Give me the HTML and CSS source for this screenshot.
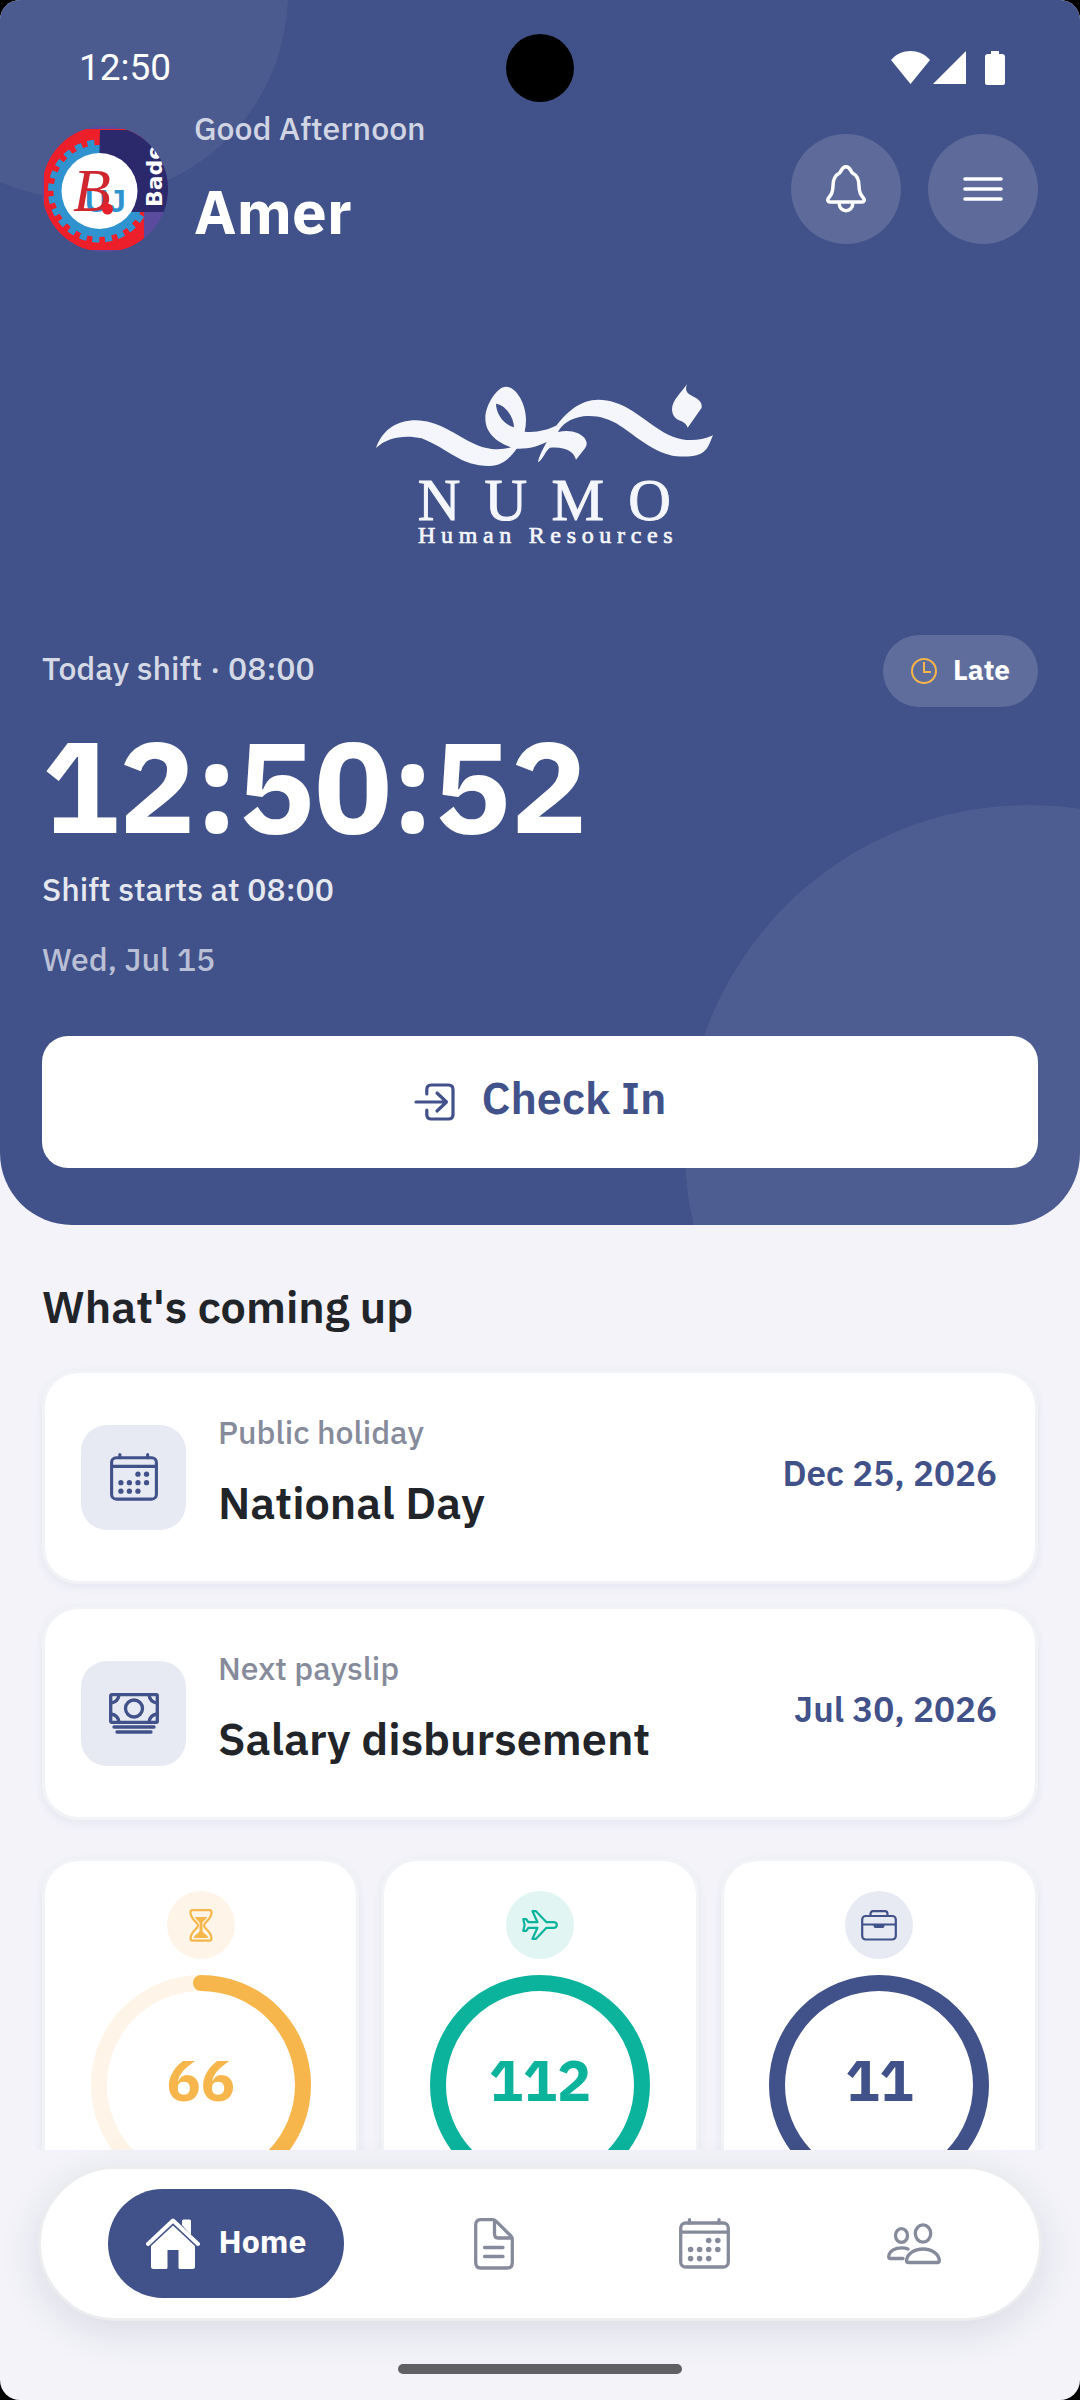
FILE: index.html
```html
<!DOCTYPE html>
<html lang="en">
<head>
<meta charset="utf-8">
<meta name="viewport" content="width=device-width, initial-scale=1">
<title>Numo Human Resources</title>
<link rel="stylesheet" href="styles.css">
</head>
<body>
<svg class="defs" aria-hidden="true">
  <symbol id="icon-calendar" viewBox="0 0 51 51">
    <g fill="none" stroke="currentColor" stroke-width="3.3" stroke-linecap="round">
      <rect x="1.7" y="5" width="47.6" height="44" rx="5"/>
      <path d="M2 14.2H49M10.5 1.7V5M40 1.7V5"/>
    </g>
    <g fill="currentColor">
      <circle cx="29.7" cy="22.5" r="2.8"/><circle cx="38.8" cy="22.5" r="2.8"/>
      <circle cx="11.6" cy="31.5" r="2.8"/><circle cx="20.6" cy="31.5" r="2.8"/><circle cx="29.7" cy="31.5" r="2.8"/><circle cx="38.8" cy="31.5" r="2.8"/>
      <circle cx="11.6" cy="40.6" r="2.8"/><circle cx="20.6" cy="40.6" r="2.8"/><circle cx="29.7" cy="40.6" r="2.8"/>
    </g>
  </symbol>
</svg>
<div class="screen">
  <main class="content">
    <section class="hero">
      <span class="bubble bubble-left"></span>
      <span class="bubble bubble-right"></span>

      <div class="status-bar">
        <span class="status-time">12:50</span>
        <svg class="status-icons" viewBox="0 0 114 34" width="114" height="34" aria-hidden="true" fill="#fff">
          <path d="M0 9C10-3 29-3 39 9L19.500 33Z"/>
          <path d="M75 0V33H42Z"/>
          <path d="M100 0h8v3h3q3 0 3 3v26q0 2-2 2h-16q-2 0-2-2V6q0-3 3-3h3z"/>
        </svg>
        <span class="camera"></span>
      </div>

      <header class="header">
        <svg class="avatar" viewBox="0 0 126 126" width="126" height="126" role="img" aria-label="Profile picture">
          <defs><clipPath id="round"><circle cx="63" cy="63" r="63"/></clipPath></defs>
          <g clip-path="url(#round)">
            <rect width="126" height="126" fill="#5a4b9e"/>
            <path d="M2 3H102V124H2Z" fill="#ec1f2a"/>
            <circle cx="57.500" cy="65" r="46" fill="#2f93cf"/>
            <circle cx="57.500" cy="65" r="48" fill="none" stroke="#2f93cf" stroke-width="7" stroke-dasharray="7 5.570"/>
            <path d="M58 4H126V86H56Z" fill="#2b286b"/>
            <circle cx="57.500" cy="65" r="38" fill="#fff"/>
            <text class="mono-blue" x="43" y="86">U</text>
            <text class="mono-blue" x="66" y="86">J</text>
            <text class="mono-red" x="31" y="85">B</text>
            <circle cx="65.500" cy="83" r="5.500" fill="#e5202c"/>
            <text class="mono-side" transform="translate(120 81) rotate(-90)">Bade</text>
          </g>
        </svg>
        <div class="greeting">
          <p class="greeting-text">Good Afternoon</p>
          <h1 class="greeting-name">Amer</h1>
        </div>
        <div class="header-actions">
          <button class="round-button" type="button" aria-label="Notifications">
            <svg viewBox="0 0 40 48" width="40" height="48" fill="none" stroke="#fff" stroke-width="3.500" stroke-linecap="round" stroke-linejoin="round">
              <path d="M4 37C1.800 37 1.200 35 2.400 33.400C5 30 6.800 28 7 21C7 13.500 9.500 10 13.500 8C15.500 6.500 15.500 1.800 20 1.800S24.500 6.500 26.500 8C30.500 10 33 13.500 33 21C33.200 28 35 30 37.600 33.400C38.800 35 38.200 37 36 37ZM13.200 38C13 48.200 27 48.200 26.800 38"/>
            </svg>
          </button>
          <button class="round-button" type="button" aria-label="Menu">
            <svg viewBox="0 0 40 24" width="40" height="24" fill="none" stroke="#fff" stroke-width="3.600" stroke-linecap="round"><path d="M2 2H38M2 12H38M2 22H38"/></svg>
          </button>
        </div>
      </header>

      <svg class="brand" viewBox="18 40 1044 486" width="348" height="162" role="img" aria-label="Numo Human Resources" fill="#f4f6fb">
        <path fill-rule="evenodd" d="M48 235C68 180 110 152 168 152C232 153 275 188 325 214C368 237 410 246 453 233C408 216 376 190 376 145C376 108 410 51 438 51C468 51 498 100 498 150Q498 170 494 186C530 189 563 182 590 167C622 125 662 90 715 90C785 90 835 137 885 171C935 206 990 227 1059 197C1048 222 1043 243 1022 252C1000 261 978 262 950 260C880 250 830 200 780 168C745 145 708 136 670 140C630 147 607 163 594 187C632 178 660 190 673 204C683 218 681 226 675 236L648 270C642 247 618 230 570 234C555 245 550 268 534 278C537 258 550 236 560 217C532 230 508 238 470 237C450 264 428 288 388 289C300 289 270 240 185 206C135 194 80 203 48 235ZM408 102C408 130 430 165 462 173C462 145 438 106 408 102Z"/>
        <path d="M981 43C966 66 936 92 936 118C936 140 950 150 965 155Q978 161 983 174L1025 114C1027 96 1014 88 998 80C980 70 974 62 981 43Z"/>
        <text class="brand-name" x="173" y="450">NUMO</text>
        <text class="brand-tag" x="174" y="521">Human Resources</text>
      </svg>

      <div class="shift-row">
        <p class="shift-label">Today shift · 08:00</p>
        <span class="late-pill">
          <svg viewBox="0 0 26 26" width="26" height="26" aria-hidden="true" fill="none" stroke="#f6b64b" stroke-width="2"><circle cx="13" cy="13" r="12"/><path d="M13 4V14H20"/></svg>
          <span class="late-text">Late</span>
        </span>
      </div>
      <time class="clock">12:50:52</time>
      <p class="shift-start">Shift starts at 08:00</p>
      <p class="shift-date">Wed, Jul 15</p>
      <button class="check-in" type="button">
        <svg viewBox="0 0 42 38" width="42" height="38" aria-hidden="true" fill="none" stroke="currentColor" stroke-width="3.200" stroke-linecap="round" stroke-linejoin="round">
          <path d="M12.800 11V6.500Q12.800 2 17.300 2H34.500Q39 2 39 6.500V31.500Q39 36 34.500 36H17.300Q12.800 36 12.800 31.500V27M2 19H32M23 10L32.500 19L23 28"/>
        </svg>
        <span class="check-in-text">Check In</span>
      </button>
    </section>

    <section class="upcoming">
      <h2 class="section-title">What's coming up</h2>
      <article class="card event">
        <span class="tile"><svg width="48" height="48" aria-hidden="true"><use href="#icon-calendar"/></svg></span>
        <div class="event-text">
          <p class="event-kind">Public holiday</p>
          <h3 class="event-name">National Day</h3>
        </div>
        <time class="event-date">Dec 25, 2026</time>
      </article>
      <article class="card event">
        <span class="tile">
          <svg viewBox="0 0 50 41" width="50" height="41" aria-hidden="true" fill="none" stroke="currentColor" stroke-width="3.300" stroke-linecap="round" stroke-linejoin="round">
            <rect x="1.700" y="1.700" width="46.600" height="27.600" rx="1"/><circle cx="25" cy="15.500" r="8.500"/>
            <path d="M10 2Q9 9 2 10M40 2Q41 9 48 10M10 29Q9 22 2 21M40 29Q41 22 48 21M5 34H45M8 39H42"/>
          </svg>
        </span>
        <div class="event-text">
          <p class="event-kind">Next payslip</p>
          <h3 class="event-name">Salary disbursement</h3>
        </div>
        <time class="event-date">Jul 30, 2026</time>
      </article>

      <div class="stats">
        <article class="card stat stat-amber">
          <span class="stat-icon">
            <svg viewBox="0 0 24 33" width="24" height="33" aria-hidden="true" fill="none" stroke="currentColor" stroke-width="2.200" stroke-linejoin="round">
              <path d="M3.500 1.200H20.500Q22.500 1.200 22.500 3.200C22.500 11 15 13 15 16.500S22.500 22 22.500 29.500Q22.500 31.700 20.500 31.700H3.500Q1.500 31.700 1.500 29.500C1.500 22 9 20 9 16.500S1.500 11 1.500 3.200Q1.500 1.200 3.500 1.200Z"/>
              <path fill="currentColor" stroke="none" d="M6 8H18C17 11 13.500 12 13.500 14V22C14 24.500 18 25 19.500 29H4.500C6 25 10 24.500 10.500 22V14C10.500 12 7 11 6 8Z"/>
            </svg>
          </span>
          <div class="ring">
            <svg class="ring-art" viewBox="0 0 220 220" aria-hidden="true"><circle class="ring-track" cx="110" cy="110" r="102"/><circle class="ring-value" cx="110" cy="110" r="102" pathLength="100" stroke-dasharray="50 50"/></svg>
            <span class="ring-number">66</span>
          </div>
        </article>
        <article class="card stat stat-green">
          <span class="stat-icon">
            <svg viewBox="0 0 36 30" width="36" height="30" aria-hidden="true" fill="none" stroke="currentColor" stroke-width="2.200" stroke-linejoin="round">
              <path d="M32 12.200H24.500L14 1.200H10.500L15.500 12.200H6.500L4 9H1.300L2.600 15L1.300 21H4L6.500 17.800H15.500L10.500 28.800H14L24.500 17.800H32Q34.800 17.500 34.800 15T32 12.200Z"/>
            </svg>
          </span>
          <div class="ring">
            <svg class="ring-art" viewBox="0 0 220 220" aria-hidden="true"><circle class="ring-value" cx="110" cy="110" r="102"/></svg>
            <span class="ring-number">112</span>
          </div>
        </article>
        <article class="card stat stat-blue">
          <span class="stat-icon">
            <svg viewBox="0 0 36 31" width="36" height="31" aria-hidden="true" fill="none" stroke="currentColor" stroke-width="2.200" stroke-linejoin="round">
              <rect x="1.200" y="6" width="33.600" height="23.500" rx="3.500"/><path d="M9.500 6V4Q9.500 1.200 12 1.200H24Q26.500 1.200 26.500 4V6M1.500 14.500H34.500"/>
              <path d="M12.500 14.500H23.500V16Q23.500 18 21.500 18H14.500Q12.500 18 12.500 16Z" fill="currentColor" stroke="none"/>
            </svg>
          </span>
          <div class="ring">
            <svg class="ring-art" viewBox="0 0 220 220" aria-hidden="true"><circle class="ring-value" cx="110" cy="110" r="102"/></svg>
            <span class="ring-number">11</span>
          </div>
        </article>
      </div>
    </section>
  </main>

  <footer class="dock">
    <nav class="tabs" aria-label="Main">
      <a class="tab tab-active" href="#home" aria-current="page">
        <svg viewBox="0 0 54 52" width="54" height="52" aria-hidden="true" fill="#fff">
          <path d="M2 26L27 2.500L52 26" fill="none" stroke="#fff" stroke-width="4" stroke-linecap="round" stroke-linejoin="round"/>
          <path d="M36 7V3Q36 1.500 37.500 1.500H43.500Q45 1.500 45 3V17Z"/>
          <path d="M27 7.500L49 28V48.500Q49 51 46.500 51H34Q32.500 51 32.500 49.500V32H21.500V49.500Q21.500 51 20 51H7.500Q5 51 5 48.500V28Z"/>
        </svg>
        <span class="tab-text">Home</span>
      </a>
      <a class="tab" href="#requests" aria-label="Requests">
        <svg viewBox="0 0 40 52" width="40" height="52" aria-hidden="true" fill="none" stroke="currentColor" stroke-width="3.300" stroke-linecap="round" stroke-linejoin="round">
          <path d="M6.500 1.700H18.500Q20.500 1.700 22 3.200L36.500 17.500Q38.300 19.300 38.300 21.500V44.500Q38.300 50 33.500 50H6.500Q1.700 50 1.700 44.500V7Q1.700 1.700 6.500 1.700ZM20.500 2.500V16Q20.500 20 24 20H37.500M10.500 29.500H29M10.500 38.500H29"/>
        </svg>
      </a>
      <a class="tab" href="#calendar" aria-label="Calendar">
        <svg width="51" height="51" aria-hidden="true"><use href="#icon-calendar"/></svg>
      </a>
      <a class="tab" href="#team" aria-label="Team">
        <svg viewBox="0 0 54 42" width="54" height="42" aria-hidden="true" fill="none" stroke="currentColor" stroke-width="3.300" stroke-linecap="round" stroke-linejoin="round">
          <ellipse cx="36" cy="10.500" rx="7.700" ry="8.700"/><ellipse cx="14.500" cy="12.500" rx="6" ry="6.800"/>
          <path d="M21.500 39.500Q19.500 39.500 19.500 37.500C20 31 27 26 36 26S52 31 52.300 37.500Q52.300 39.500 50.500 39.500ZM16 35.500H3.500Q1.700 35.500 1.700 33.500C2.500 27.500 8.500 24.800 14.500 24.800Q18.500 24.800 21 26"/>
        </svg>
      </a>
    </nav>
    <span class="home-bar"></span>
  </footer>
</div>
</body>
</html>
```

FILE: styles.css
```css
* { box-sizing: border-box; }

html { background: #000; }

body {
  margin: 0;
  font-family: "IBM Plex Sans", Roboto, "Liberation Sans", sans-serif;
  color: #212529;
}

h1, h2, h3, p { margin: 0; }

button { border: 0; padding: 0; font: inherit; cursor: pointer; }

a { text-decoration: none; }

.defs { position: absolute; width: 0; height: 0; }

.screen {
  display: flex;
  flex-direction: column;
  height: 100vh;
  overflow: hidden;
  border-radius: 20px;
  background: #f3f3f9;
}

.content { flex: 1; min-height: 0; overflow: hidden; }

/* Hero */
.hero {
  position: relative;
  display: flex;
  flex-direction: column;
  padding: 0 42px 57px;
  overflow: hidden;
  border-radius: 0 0 72px 72px;
  background: #415189;
  color: #fff;
}

.hero > * { position: relative; }

.hero > .bubble { position: absolute; border-radius: 50%; background: #fff; }
.bubble-left { left: -124px; top: -213px; width: 412px; height: 412px; opacity: .06; }
.bubble-right { right: -293px; bottom: -268px; width: 688px; height: 688px; opacity: .07; }

.status-bar {
  display: flex;
  align-items: flex-start;
  justify-content: space-between;
  height: 104px;
  padding: 32px 33px 0 37px;
}

.status-time { font: 400 37px/72px Roboto, sans-serif; }
.status-icons { margin-top: 19px; }

.camera {
  position: absolute;
  left: 50%;
  top: 34px;
  width: 68px;
  height: 68px;
  margin-left: -34px;
  border-radius: 50%;
  background: #000;
}

.header { display: flex; align-items: center; gap: 26px; min-height: 170px; }
.avatar { flex: none; }
.mono-blue { font: 700 32px "Liberation Sans", sans-serif; fill: #2f93cf; }
.mono-red { font: italic 400 62px "Liberation Serif", serif; fill: #d0262f; }
.mono-side { font: 700 22px "DejaVu Sans", sans-serif; fill: #fff; }

.greeting { flex: 1; align-self: flex-start; }
.greeting-text { font-size: 32px; line-height: 48px; font-weight: 500; color: #d0d4e3; }
.greeting-name { font-size: 62px; line-height: 118px; font-weight: 700; }

.header-actions { display: flex; gap: 27px; }

.round-button {
  display: grid;
  place-items: center;
  width: 110px;
  height: 110px;
  border-radius: 50%;
  background: rgba(255, 255, 255, .15);
}

.brand { align-self: center; margin-top: 109px; overflow: visible; }
.brand-name,
.brand-tag { stroke: #f4f6fb; stroke-width: 3; }
.brand-name { font: 400 177px "Liberation Serif", serif; letter-spacing: 73px; }
.brand-tag { font: 400 72px "Liberation Serif", serif; letter-spacing: 17px; stroke-width: 2; }

.shift-row {
  display: flex;
  align-items: center;
  justify-content: space-between;
  margin-top: 90px;
}

.shift-label,
.shift-start,
.shift-date { font-size: 32px; line-height: 52px; font-weight: 500; }
.shift-label { padding-bottom: 6px; color: #d5d9e6; }
.shift-start { color: #e6e8f0; }
.shift-date { margin-top: 18px; color: #b9bfd5; }

.late-pill {
  display: flex;
  align-items: center;
  gap: 16px;
  height: 72px;
  padding: 0 28px;
  border-radius: 36px;
  background: rgba(255, 255, 255, .16);
}

.late-text { padding-bottom: 4px; font-size: 28px; font-weight: 700; }

.clock { font-size: 128px; line-height: 156px; font-weight: 700; }

.check-in {
  display: flex;
  align-items: center;
  justify-content: center;
  gap: 26px;
  height: 132px;
  margin-top: 51px;
  border-radius: 26px;
  background: #fff;
  color: #415189;
}

.check-in-text { padding-bottom: 10px; font-size: 45px; line-height: 60px; font-weight: 600; }

/* Upcoming */
.upcoming { padding: 48px 42px 0; }

.section-title { font-size: 45px; line-height: 66px; font-weight: 600; margin-bottom: 31px; }

.card {
  border: 3px solid #f2f3f6;
  border-radius: 36px;
  background: #fff;
  background-clip: padding-box;
  box-shadow: 0 3px 8px rgba(65, 81, 137, .08);
}

.event {
  display: flex;
  align-items: center;
  gap: 32px;
  min-height: 214px;
  padding: 0 38px 0 36px;
  margin-bottom: 22px;
}

.tile {
  display: grid;
  place-items: center;
  width: 105px;
  height: 105px;
  border-radius: 26px;
  background: #e7eaf2;
  color: #415189;
}

.event-text { flex: 1; }
.event-kind { font-size: 32px; line-height: 50px; font-weight: 500; color: #868b9b; }
.event-name { font-size: 45px; line-height: 90px; font-weight: 600; }
.event-date { padding-bottom: 8px; font-size: 35px; font-weight: 600; color: #415189; }

.stats {
  display: grid;
  grid-template-columns: repeat(3, 1fr);
  gap: 22px;
  padding-top: 16px;
}

.stat { display: flex; flex-direction: column; align-items: center; padding: 30px 0 33px; }

.stat-icon {
  display: grid;
  place-items: center;
  width: 68px;
  height: 68px;
  margin-bottom: 16px;
  border-radius: 50%;
}

.ring { display: grid; place-items: center; width: 220px; height: 220px; }
.ring-art, .ring-number { grid-area: 1 / 1; }
.ring-art { width: 100%; height: 100%; }
.ring-track, .ring-value { fill: none; stroke-width: 16; }
.ring-track { stroke: #fef5e8; }
.ring-value { stroke: currentColor; stroke-linecap: round; transform: rotate(-90deg); transform-origin: center; }
.ring-number { padding-bottom: 10px; font-size: 57px; line-height: 80px; font-weight: 700; }

.stat-amber { color: #f6b64b; }
.stat-amber .stat-icon { background: #fef5e8; }
.stat-green { color: #0bb39c; }
.stat-green .stat-icon { background: #e1f5f2; }
.stat-blue { color: #415189; }
.stat-blue .stat-icon { background: #e7eaf2; }

/* Bottom navigation */
.dock {
  position: relative;
  display: flex;
  flex-direction: column;
  align-items: center;
  padding: 16px 38px 26px;
}

.tabs {
  display: flex;
  align-items: center;
  justify-content: space-around;
  align-self: stretch;
  height: 155px;
  padding: 0 20px 0 22px;
  border: 3px solid #ecedef;
  border-radius: 78px;
  background: #fff;
  box-shadow: 0 10px 40px rgba(40, 50, 80, .12);
}

.tab {
  display: flex;
  align-items: center;
  justify-content: center;
  width: 120px;
  height: 109px;
  color: #868b9b;
}

.tab-active {
  gap: 19px;
  width: 236px;
  border-radius: 55px;
  background: #415189;
  color: #fff;
}

.tab-text { padding-bottom: 6px; font-size: 32px; font-weight: 700; }

.home-bar { width: 284px; height: 10px; margin-top: 43px; border-radius: 5px; background: #616163; }
```
